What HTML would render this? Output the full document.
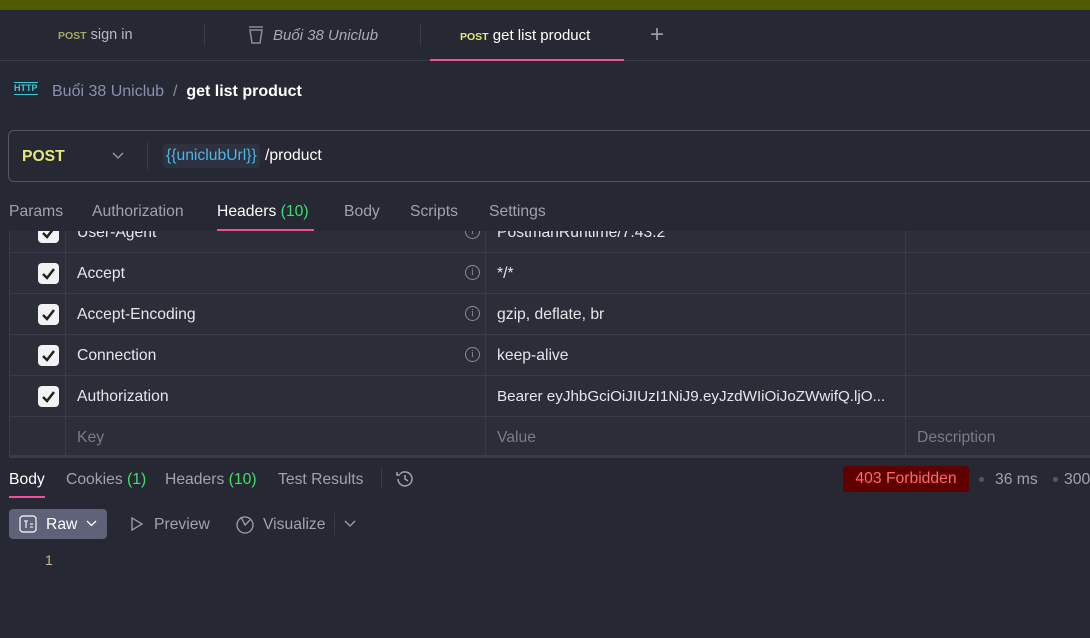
<!DOCTYPE html>
<html><head><meta charset="utf-8"><style>
*{margin:0;padding:0;box-sizing:border-box}
body{width:1090px;height:638px;overflow:hidden;background:#262833;font-family:"Liberation Sans","Noto Sans CJK SC",sans-serif;color:#e6e6ea;position:relative;font-size:15.7px}
.a{position:absolute;white-space:nowrap}
.post{font-size:10.5px;font-weight:bold}
.row{position:absolute;left:9px;width:1081px;height:41px;border-bottom:1px solid #393b48;background:#2b2d39}
.row .c{position:absolute;top:0;bottom:0;border-left:1px solid #393b48}
.cb{position:absolute;left:29px;top:10px;width:21px;height:21px;background:#f2f2f4;border-radius:4px}
.cb svg{position:absolute;left:3px;top:4px}
.k{position:absolute;left:68px;top:12px}
.v{position:absolute;left:488px;top:12px}
.i{position:absolute;left:456px;top:12px;width:15px;height:15px;border:1px solid #8a8c98;border-radius:50%;font-size:10px;color:#8a8c98;text-align:center;line-height:13px;font-family:"Liberation Serif",serif}
</style></head><body>
<div class="a" style="left:0;top:0;width:1090px;height:10px;background:#525a00"></div>
<div class="a" style="left:0;top:60px;width:1090px;height:1px;background:#393b48"></div>
<div class="a" style="left:204px;top:24px;width:1px;height:22px;background:#393b48"></div>
<div class="a" style="left:420px;top:24px;width:1px;height:22px;background:#393b48"></div>
<div class="a" style="left:58px;top:27px;font-size:14.5px;color:#b8bac4"><span class="post" style="color:#a8a860">POST</span> sign in</div>
<svg class="a" style="left:248px;top:25px" width="16" height="20" viewBox="0 0 16 20"><path d="M1 2h14M2 5h12l-2 13H4z" fill="none" stroke="#8a8c98" stroke-width="1.5"/></svg>
<div class="a" style="left:273px;top:27px;font-size:15px;color:#a8aab4;font-style:italic">Buổi 38 Uniclub</div>
<div class="a" style="left:460px;top:27px;font-size:15px;color:#fff"><span class="post" style="color:#e8e878">POST</span> get list product</div>
<div class="a" style="left:430px;top:59px;width:194px;height:2px;background:#f0509a"></div>
<div class="a" style="left:650px;top:21px;font-size:24px;color:#9a9ca8;font-weight:300">+</div>
<div class="a" style="left:14px;top:82px;font-size:9px;color:#3bc8d8;font-weight:bold;border-top:1px solid #3bc8d8;border-bottom:1px solid #3bc8d8;line-height:11px">HTTP</div>
<div class="a" style="left:52px;top:83px;color:#8a90b0;font-size:16px">Buổi 38 Uniclub <span style="color:#8a8c98">&nbsp;/&nbsp;</span> <b style="color:#fff">get list product</b></div>
<div class="a" style="left:8px;top:130px;width:1090px;height:52px;border:1px solid #545665;border-radius:6px"></div>
<div class="a" style="left:22px;top:148px;color:#e8e878;font-weight:bold">POST</div>
<svg class="a" style="left:112px;top:152px" width="12" height="8"><path d="M1 1l5 5 5-5" fill="none" stroke="#9a9ca8" stroke-width="1.3"/></svg>
<div class="a" style="left:147px;top:142px;width:1px;height:28px;background:#393b48"></div>
<div class="a" style="left:163px;top:144px;height:24px;padding:3px 3px;background:#2e3140;border-radius:4px;color:#4ab8e8">{{uniclubUrl}}</div>
<div class="a" style="left:265px;top:147px;color:#fff">/product</div>
<div class="a" style="left:9px;top:203px;color:#a0a2ae">Params</div>
<div class="a" style="left:92px;top:203px;color:#a0a2ae">Authorization</div>
<div class="a" style="left:217px;top:203px;color:#fff">Headers <span style="color:#3ee06a">(10)</span></div>
<div class="a" style="left:217px;top:229px;width:97px;height:2px;background:#f0509a"></div>
<div class="a" style="left:344px;top:203px;color:#a0a2ae">Body</div>
<div class="a" style="left:410px;top:203px;color:#a0a2ae">Scripts</div>
<div class="a" style="left:489px;top:203px;color:#a0a2ae">Settings</div>
<div style="position:absolute;left:0;top:231px;width:1090px;height:227px;overflow:hidden">
<div class="row" style="top:-19px"><div class="c" style="left:0"></div><div class="c" style="left:56px"></div><div class="c" style="left:476px"></div><div class="c" style="left:896px"></div><div class="cb"><svg width="15" height="13"><path d="M2 7l4 4 7-9" fill="none" stroke="#222" stroke-width="2.5"/></svg></div><div class="k">User-Agent</div><div class="i">i</div><div class="v">PostmanRuntime/7.43.2</div></div>
<div class="row" style="top:22px"><div class="c" style="left:0"></div><div class="c" style="left:56px"></div><div class="c" style="left:476px"></div><div class="c" style="left:896px"></div><div class="cb"><svg width="15" height="13"><path d="M2 7l4 4 7-9" fill="none" stroke="#222" stroke-width="2.5"/></svg></div><div class="k">Accept</div><div class="i">i</div><div class="v">*/*</div></div>
<div class="row" style="top:63px"><div class="c" style="left:0"></div><div class="c" style="left:56px"></div><div class="c" style="left:476px"></div><div class="c" style="left:896px"></div><div class="cb"><svg width="15" height="13"><path d="M2 7l4 4 7-9" fill="none" stroke="#222" stroke-width="2.5"/></svg></div><div class="k">Accept-Encoding</div><div class="i">i</div><div class="v">gzip, deflate, br</div></div>
<div class="row" style="top:104px"><div class="c" style="left:0"></div><div class="c" style="left:56px"></div><div class="c" style="left:476px"></div><div class="c" style="left:896px"></div><div class="cb"><svg width="15" height="13"><path d="M2 7l4 4 7-9" fill="none" stroke="#222" stroke-width="2.5"/></svg></div><div class="k">Connection</div><div class="i">i</div><div class="v">keep-alive</div></div>
<div class="row" style="top:145px"><div class="c" style="left:0"></div><div class="c" style="left:56px"></div><div class="c" style="left:476px"></div><div class="c" style="left:896px"></div><div class="cb"><svg width="15" height="13"><path d="M2 7l4 4 7-9" fill="none" stroke="#222" stroke-width="2.5"/></svg></div><div class="k">Authorization</div><div class="v" style="font-size:15.2px">Bearer eyJhbGciOiJIUzI1NiJ9.eyJzdWIiOiJoZWwifQ.ljO...</div></div>
<div class="row" style="top:186px;height:41px;border-bottom:3px solid #393b48"><div class="c" style="left:0"></div><div class="c" style="left:56px"></div><div class="c" style="left:476px"></div><div class="c" style="left:896px"></div><div class="k" style="color:#7a7c8a">Key</div><div class="v" style="color:#7a7c8a">Value</div><div class="v" style="left:908px;color:#7a7c8a">Description</div></div>
</div>
<div class="a" style="left:9px;top:471px;color:#fff">Body</div>
<div class="a" style="left:9px;top:496px;width:36px;height:2px;background:#f0509a"></div>
<div class="a" style="left:66px;top:471px;color:#a0a2ae">Cookies <span style="color:#3ee06a">(1)</span></div>
<div class="a" style="left:165px;top:471px;color:#a0a2ae">Headers <span style="color:#3ee06a">(10)</span></div>
<div class="a" style="left:278px;top:471px;color:#a0a2ae">Test Results</div>
<div class="a" style="left:381px;top:468px;width:1px;height:20px;background:#393b48"></div>
<svg class="a" style="left:394px;top:468px" width="22" height="22" viewBox="0 0 22 22"><path d="M4 11a7 7 0 1 0 2-5M3 4v3h3M11 7v4l3 2" fill="none" stroke="#a0a2ae" stroke-width="1.5"/></svg>
<div class="a" style="left:843px;top:466px;width:126px;height:26px;background:#5e0000;border-radius:3px;color:#ff6a6a;text-align:center;line-height:26px">403 Forbidden</div>
<div class="a" style="left:979px;top:477px;width:5px;height:5px;border-radius:50%;background:#555765"></div>
<div class="a" style="left:995px;top:471px;color:#a0a2ae">36 ms</div>
<div class="a" style="left:1053px;top:477px;width:5px;height:5px;border-radius:50%;background:#555765"></div>
<div class="a" style="left:1064px;top:471px;color:#a0a2ae">300</div>
<div class="a" style="left:9px;top:509px;width:98px;height:30px;background:#5e6178;border-radius:4px"></div>
<svg class="a" style="left:19px;top:515px" width="18" height="18"><rect x="1" y="1" width="16" height="16" rx="3" fill="none" stroke="#e6e6ea" stroke-width="1.4"/><path d="M5 6h4M7 6v7M11 9h3M11 12h3" stroke="#e6e6ea" stroke-width="1.3"/></svg>
<div class="a" style="left:46px;top:516px;color:#fff">Raw</div>
<svg class="a" style="left:86px;top:520px" width="11" height="8"><path d="M1 1l4.5 4.5L10 1" fill="none" stroke="#fff" stroke-width="1.3"/></svg>
<svg class="a" style="left:130px;top:516px" width="14" height="16"><path d="M2 2l10 6-10 6z" fill="none" stroke="#a0a2ae" stroke-width="1.3"/></svg>
<div class="a" style="left:154px;top:516px;color:#a0a2ae">Preview</div>
<svg class="a" style="left:235px;top:513px" width="20" height="22"><circle cx="10" cy="12" r="8" fill="none" stroke="#a0a2ae" stroke-width="1.3"/><path d="M6 4l4 8 5-5" fill="none" stroke="#a0a2ae" stroke-width="1.3"/></svg>
<div class="a" style="left:263px;top:516px;color:#a0a2ae">Visualize</div>
<div class="a" style="left:334px;top:513px;width:1px;height:22px;background:#393b48"></div>
<svg class="a" style="left:344px;top:520px" width="12" height="8"><path d="M1 1l5 5 5-5" fill="none" stroke="#a0a2ae" stroke-width="1.3"/></svg>
<div class="a" style="left:45px;top:552px;color:#c8b88a;font-size:14px">1</div>
</body></html>
